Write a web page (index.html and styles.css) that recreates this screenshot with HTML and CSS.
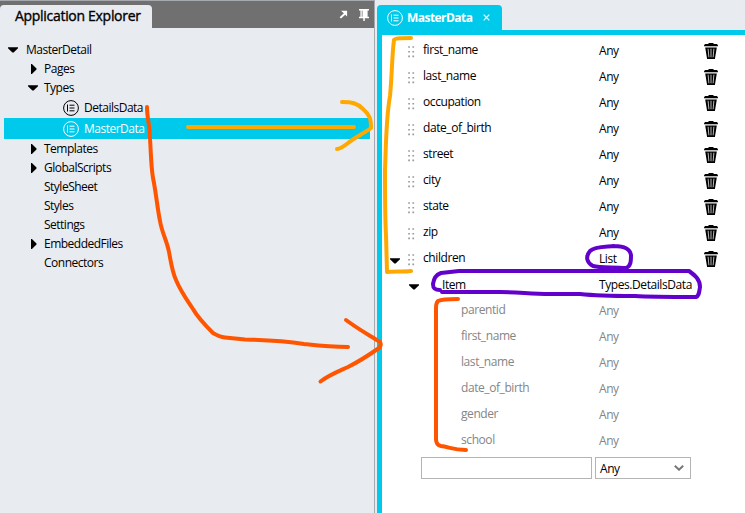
FILE: index.html
```html
<!DOCTYPE html>
<html lang="en">
<head>
<meta charset="utf-8">
<title>Application Explorer</title>
<link rel="stylesheet" href="styles.css">
</head>
<body>
<svg class="defs" aria-hidden="true">
  <symbol id="type" viewBox="0 0 16 16"><circle cx="8" cy="8" r="7.4"/><path d="M4.5 4.5v7M6.5 5.2h5M6.5 8h5M6.5 10.8h5"/></symbol>
  <symbol id="down" viewBox="0 0 10 6"><path d="M0 .3h10v1L5.6 5.6H4.4L0 1.3z"/></symbol>
  <symbol id="right" viewBox="0 0 6 10"><path d="M0 0h.9L5.5 4.4v1L.9 10H0z"/></symbol>
  <symbol id="grip" viewBox="0 0 7 12"><path d="M.2 1h1.7M4.4 1h1.7M.2 5.7h1.7M4.4 5.7h1.7M.2 10.4h1.7M4.4 10.4h1.7"/></symbol>
  <symbol id="trash" viewBox="0 0 14 17"><path d="M4.5 0h5v1H13l1 1.5v.8H0v-.8L1 1h3.5zM1.2 4.4h11.6L10.9 16H3.1z"/><path class="slots" d="M4.1 5.7l.8 8.6M7 5.7v8.6M9.900 5.7l-.8 8.600"/></symbol>
</svg>
<div class="app">
  <aside class="explorer">
    <header class="explorer-head">
      <h1 class="explorer-tab">Application Explorer</h1>
      <svg class="float" viewBox="0 0 10 10"><path d="M2.2.8H9v6.5L6.9 5.2 2.2 9.5.7 8l4.7-4.5z"/></svg>
      <svg class="pin" viewBox="0 0 10 12"><path d="M0 0h10v1.6H8.6v6.2H10v1.5H5.8V12H4.3V9.3H0V7.8h1.4V1.6H0z"/><path class="pin-core" d="M3.2 1.7v6"/></svg>
    </header>
    <ul class="tree">
      <li class="node root"><svg class="down"><use href="#down"/></svg><span>MasterDetail</span></li>
      <li class="node"><svg class="right"><use href="#right"/></svg><span>Pages</span></li>
      <li class="node"><svg class="down open"><use href="#down"/></svg><span>Types</span></li>
      <li class="node leaf"><svg class="type"><use href="#type"/></svg><span>DetailsData</span></li>
      <li class="node leaf selected"><svg class="type"><use href="#type"/></svg><span>MasterData</span></li>
      <li class="node"><svg class="right"><use href="#right"/></svg><span>Templates</span></li>
      <li class="node"><svg class="right"><use href="#right"/></svg><span>GlobalScripts</span></li>
      <li class="node"><span>StyleSheet</span></li>
      <li class="node"><span>Styles</span></li>
      <li class="node"><span>Settings</span></li>
      <li class="node"><svg class="right"><use href="#right"/></svg><span>EmbeddedFiles</span></li>
      <li class="node"><span>Connectors</span></li>
    </ul>
  </aside>
  <main class="editor">
    <div class="tab"><svg class="type"><use href="#type"/></svg><span class="tab-name">MasterData</span><svg class="close" viewBox="0 0 7 7"><path d="M.7.7l5.6 5.6M6.3.7L.7 6.3"/></svg></div>
    <div class="sheet">
      <div class="row"><i></i><svg class="grip"><use href="#grip"/></svg><span class="name">first_name</span><span class="kind">Any</span><svg class="trash"><use href="#trash"/></svg></div>
      <div class="row"><i></i><svg class="grip"><use href="#grip"/></svg><span class="name">last_name</span><span class="kind">Any</span><svg class="trash"><use href="#trash"/></svg></div>
      <div class="row"><i></i><svg class="grip"><use href="#grip"/></svg><span class="name">occupation</span><span class="kind">Any</span><svg class="trash"><use href="#trash"/></svg></div>
      <div class="row"><i></i><svg class="grip"><use href="#grip"/></svg><span class="name">date_of_birth</span><span class="kind">Any</span><svg class="trash"><use href="#trash"/></svg></div>
      <div class="row"><i></i><svg class="grip"><use href="#grip"/></svg><span class="name">street</span><span class="kind">Any</span><svg class="trash"><use href="#trash"/></svg></div>
      <div class="row"><i></i><svg class="grip"><use href="#grip"/></svg><span class="name">city</span><span class="kind">Any</span><svg class="trash"><use href="#trash"/></svg></div>
      <div class="row"><i></i><svg class="grip"><use href="#grip"/></svg><span class="name">state</span><span class="kind">Any</span><svg class="trash"><use href="#trash"/></svg></div>
      <div class="row"><i></i><svg class="grip"><use href="#grip"/></svg><span class="name">zip</span><span class="kind">Any</span><svg class="trash"><use href="#trash"/></svg></div>
      <div class="row"><svg class="down"><use href="#down"/></svg><svg class="grip"><use href="#grip"/></svg><span class="name">children</span><span class="kind">List</span><svg class="trash"><use href="#trash"/></svg></div>
      <div class="row item"><svg class="down"><use href="#down"/></svg><span class="name">Item</span><span class="kind">Types.DetailsData</span></div>
      <div class="row sub"><span class="name">parentid</span><span class="kind">Any</span></div>
      <div class="row sub"><span class="name">first_name</span><span class="kind">Any</span></div>
      <div class="row sub"><span class="name">last_name</span><span class="kind">Any</span></div>
      <div class="row sub"><span class="name">date_of_birth</span><span class="kind">Any</span></div>
      <div class="row sub"><span class="name">gender</span><span class="kind">Any</span></div>
      <div class="row sub"><span class="name">school</span><span class="kind">Any</span></div>
      <div class="new"><div class="field"></div><div class="select"><span>Any</span><svg class="chevron" viewBox="0 0 10 6"><path d="M.8.8L5 4.7 9.2.8"/></svg></div></div>
    </div>
  </main>
</div>
<svg class="ink" viewBox="0 0 745 513">
  <g class="orange">
    <path d="M188 127H354"/>
    <path d="M342 102C352 102 357 103 363 109C370 115 371 119 371 128C363 134 355 137 348 143C344 146 341 149 337 149"/>
    <path d="M411 38C404 38 395 38 394 40C392 54 392 76 390 96C386 118 386 145 385 170C385 202 385 220 386 235L387 272C395 271 403 272 411 271"/>
  </g>
  <g class="red">
    <path d="M147 107C147 119 150 125 150 138C151 154 151 166 153 178C156 192 157 206 160 221C162 233 167 241 169 252C171 262 172 271 176 280C181 292 187 300 193 309C198 318 206 326 213 333C218 336 220 337 225 337.5L245 339.5C268 340 285 341 304 344C322 346 330 347 348 347"/>
    <path d="M346 320C358 329 369 335 380 342Q382 345 379 348C369 355 360 361 348 367C337 372 329 375 320.5 381.5"/>
    <path d="M458 299C449 299 442 299 438 301Q436 303 436 308V439Q436 445 441 446C449 447 453 450 466 450"/>
  </g>
  <g class="violet">
    <path d="M614 246C608 247 595 246 590 251C585 257 587 263 593 266C600 268 612 267 626 268C631 266 631 261 631 255C630 249 624 246 614 246"/>
    <path d="M440 290C434 290 433 288 433 284C434 279 435 275 441 273L459 271H689C696 276 700 280 700 287C699 293 699 296 696 297C671 297 650 297 635 296C612 296 598 296 580 294H550C530 294 519 292 500 292H442"/>
  </g>
</svg>
</body>
</html>
```
FILE: styles.css
```css
* { box-sizing: border-box; }
body {
  margin: 0;
  width: 745px;
  height: 513px;
  overflow: hidden;
  background: #e8ebf0;
  color: #000;
  font: 12px/19px "Open Sans", "Noto Sans", sans-serif;
  letter-spacing: -0.42px;
}
svg { display: block; flex: none; }
.defs { position: absolute; width: 0; height: 0; }
.app { display: flex; height: 513px; gap: 2px; }

.explorer { width: 375px; border-top: 1px solid #a6a9ad; border-right: 1px solid #a6a9ad; }
.explorer-head { display: flex; height: 27px; background: #707070; align-items: flex-start; }
.explorer-tab {
  width: 152px; height: 23px; margin: 4px 187px 0 0; padding-left: 15px;
  background: #e8ebf0; border-radius: 4px 4px 0 0;
  font-size: 14px; line-height: 22px; font-weight: 400; letter-spacing: -0.3px; white-space: nowrap;
  -webkit-text-stroke: 0.35px #000;
}
.float { width: 9px; height: 9px; margin-top: 9px; fill: #fff; }
.pin { width: 10px; height: 12px; margin: 8px 0 0 11px; fill: #fff; }
.pin-core { stroke: #999; }

.tree { list-style: none; margin: 12px 4px 0; padding: 0; letter-spacing: -0.5px; }
.node { display: flex; align-items: center; height: 19px; padding-left: 40px; }
.node .right { width: 6px; height: 10px; margin: 0 7px 0 -13px; }
.node .right, .node .open { position: relative; }
.down { width: 10px; height: 6px; }
.node .open { margin: 0 6px 0 -16px; }
.root { padding-left: 4px; gap: 8px; }
.leaf { height: 21px; padding-left: 59px; gap: 5px; }
.type { width: 16px; height: 16px; fill: none; stroke: currentColor; stroke-width: 1; }
.selected { background: #00caeb; color: #fff; }

.editor { flex: 1; display: flex; flex-direction: column; }
.tab {
  display: flex; align-items: center; width: 125px; height: 25px; margin-top: 5px; padding-left: 10px;
  background: #00caeb; color: #fff; border-radius: 4px 4px 0 0;
}
.tab-name { flex: none; width: 80px; padding-left: 4px; font-weight: 700; letter-spacing: -0.55px; }
.close { width: 7px; height: 7px; fill: none; stroke: #fff; stroke-width: 1.2; }
.sheet { flex: 1; border: solid #00caeb; border-width: 5px 0 0 5px; padding-top: 2px; background: #fff; }
.row {
  display: grid; grid-template-columns: 18px 15px 176px 105px 14px;
  align-items: center; height: 26px; padding-left: 8px;
}
.row .name { margin-top: -2px; }
.row .down { margin-top: 5px; }
.grip { width: 7px; height: 12px; margin-top: 3px; stroke: #999; stroke-width: 1.6; }
.trash { width: 14px; height: 17px; margin-top: 3px; }
.slots { stroke: #bbb; stroke-width: 1; fill: none; }
.item { grid-template-columns: 33px 157px 120px; padding-left: 27px; }
.row.item .name, .row.item .kind { margin-top: 1px; }
.sub { grid-template-columns: 138px 100px; padding-left: 79px; color: #858585; }
.new { display: flex; gap: 3px; margin: 4px 0 0 39px; }
.field, .select { height: 22px; border: 1px solid #b4b4b4; }
.field { width: 171px; }
.select { display: flex; align-items: center; justify-content: space-between; width: 96px; padding: 0 6px 0 4px; }
.chevron { width: 10px; height: 6px; fill: none; stroke: #777; stroke-width: 2; }

.ink { position: absolute; inset: 0; width: 745px; height: 513px; fill: none; stroke-linecap: round; stroke-linejoin: round; }
.orange { stroke: #ffa800; stroke-width: 4; }
.red { stroke: #ff5500; stroke-width: 4; }
.violet { stroke: #6200cc; stroke-width: 4; }
```
